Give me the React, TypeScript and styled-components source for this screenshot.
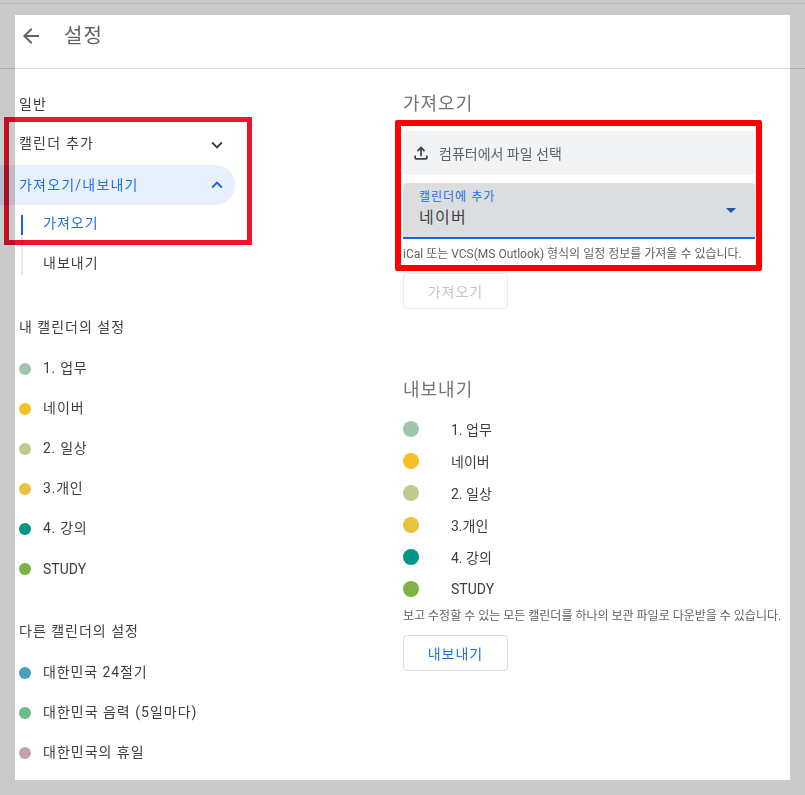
import React from "react";
import styled, { createGlobalStyle } from "styled-components";

const Global = createGlobalStyle`
  html, body { margin: 0; padding: 0; background: #cacaca; }
  * { box-sizing: border-box; }
  body { font-family: Roboto, "Noto Sans CJK KR", sans-serif; color: #3c4043; }
`;

const Page = styled.div`
  position: relative;
  width: 805px;
  height: 795px;
  padding: 15px;
  background: #cacaca;
  overflow: hidden;
`;
const TopRule = styled.div`
  position: absolute;
  left: 0;
  right: 0;
  top: 3px;
  height: 1px;
  background: #b4b4b4;
`;
const Panel = styled.div`
  width: 775px;
  height: 765px;
  background: #fff;
  display: flex;
  flex-direction: column;
`;
const Header = styled.header`
  height: 54px;
  flex: none;
  margin: 0 -15px;
  display: flex;
  align-items: center;
  border-bottom: 1px solid rgba(0, 0, 0, 0.13);
  padding: 0 0 11px 19px;
`;
const Title = styled.h1`
  margin: 0 0 0 21px;
  font-size: 20px;
  font-weight: 400;
  letter-spacing: 1px;
  color: #5f6368;
  line-height: 28px;
`;
const Body = styled.div`
  display: flex;
  flex: 1;
`;
const Sidebar = styled.nav`
  width: 388px;
  flex: none;
  padding-top: 14px;
  padding-left: 4px;
`;
const SideRow = styled.div`
  height: 40px;
  display: flex;
  align-items: center;
  font-size: 14px;
  letter-spacing: 1px;
  color: #3c4043;
`;
const GroupLabel = styled(SideRow)`
  margin-top: 24px;
  padding-bottom: 2px;
`;
const Expander = styled.div<{ $active?: boolean }>`
  height: 40px;
  display: flex;
  align-items: center;
  justify-content: space-between;
  font-size: 14px;
  letter-spacing: 1.2px;
  padding-bottom: 2px;
  width: ${(p) => (p.$active ? "235px" : "209px")};
  margin: ${(p) => (p.$active ? "2px 0 0 -19px" : "0")};
  padding-left: ${(p) => (p.$active ? "19px" : "0")};
  padding-right: ${(p) => (p.$active ? "7px" : "0")};
  color: ${(p) => (p.$active ? "#1a73e8" : "#3c4043")};
  background: ${(p) => (p.$active ? "#e8f0fe" : "transparent")};
  border-radius: ${(p) => (p.$active ? "0 20px 20px 0" : "0")};
  mix-blend-mode: ${(p) => (p.$active ? "multiply" : "normal")};
`;
const ChevronSvg = styled.svg<{ $active?: boolean }>`
  width: 22px;
  height: 22px;
  flex: none;
  margin-top: ${(p) => (p.$active ? "2px" : "6px")};
  fill: ${(p) => (p.$active ? "#1a65d2" : "#3c4043")};
`;
const SubList = styled.div`
  position: relative;
  margin-left: 2px;
  margin-top: -2px;
  &::before {
    content: "";
    position: absolute;
    left: 0;
    top: 12px;
    width: 2px;
    height: 60px;
    background: #e8eaed;
  }
`;
const SubItem = styled.div<{ $active?: boolean }>`
  position: relative;
  height: 40px;
  display: flex;
  align-items: center;
  padding-left: 22px;
  padding-bottom: 2px;
  font-size: 14px;
  letter-spacing: 1px;
  color: ${(p) => (p.$active ? "#1a73e8" : "#3c4043")};
  &::before {
    content: "";
    display: ${(p) => (p.$active ? "block" : "none")};
    position: absolute;
    left: 0;
    top: 12px;
    width: 2px;
    height: 20px;
    background: #1a65d2;
  }
`;
const Dot = styled.span<{ $c: string; $s: number; $drop?: number }>`
  width: ${(p) => p.$s}px;
  height: ${(p) => p.$s}px;
  margin-top: ${(p) => p.$drop ?? 0}px;
  border-radius: 50%;
  background: ${(p) => p.$c};
  flex: none;
`;
const CalRow = styled(SideRow)<{ $track: number; $lift: number }>`
  gap: 12px;
  letter-spacing: ${(p) => p.$track}px;
  padding-top: ${(p) => p.$lift}px;
`;
const SideGroup = styled.div`
  display: flex;
  flex-direction: column;
`;
const Main = styled.main`
  flex: 1;
  padding-top: 23px;
  display: flex;
  flex-direction: column;
`;
const Heading = styled.h2<{ $top?: number }>`
  margin: ${(p) => p.$top ?? 0}px 0 0;
  font-size: 18px;
  font-weight: 400;
  line-height: 24px;
  letter-spacing: 1px;
  color: #70757a;
`;
const FileBar = styled.div`
  width: 352px;
  height: 44px;
  margin-top: 15px;
  background: #f1f3f4;
  border-radius: 4px;
  display: flex;
  align-items: center;
  padding-left: 8px;
  gap: 8px;
  font-size: 14px;
  color: #5f6368;
`;
const SelectBox = styled.div`
  position: relative;
  width: 352px;
  height: 56px;
  margin-top: 8px;
  background: #dcdddf;
  border-radius: 4px 4px 0 0;
  border-bottom: 2px solid #1a65d2;
  padding: 7px 16px 0;
`;
const SelectLabel = styled.div`
  font-size: 12px;
  line-height: 15px;
  letter-spacing: 1px;
  color: #1a73e8;
`;
const SelectValue = styled.div`
  font-size: 16px;
  line-height: 20px;
  margin-top: 3px;
  letter-spacing: 1.3px;
  color: #3c4043;
`;
const Caret = styled.span`
  position: absolute;
  right: 19px;
  top: 25px;
  border-left: 5px solid transparent;
  border-right: 5px solid transparent;
  border-top: 5px solid #1a56b0;
`;
const Hint = styled.p<{ $top: number }>`
  margin: ${(p) => p.$top}px 0 0;
  font-size: 12px;
  line-height: 16px;
  color: #5f6368;
  white-space: nowrap;
`;
const Button = styled.button<{ $disabled?: boolean; $top: number }>`
  display: block;
  width: 105px;
  height: 36px;
  margin-top: ${(p) => p.$top}px;
  background: #fff;
  border: 1px solid ${(p) => (p.$disabled ? "#ebecee" : "#dadce0")};
  border-radius: 4px;
  font-family: inherit;
  font-size: 14px;
  letter-spacing: 1px;
  padding: 0;
  color: ${(p) => (p.$disabled ? "#c4c6c9" : "#1a73e8")};
`;
const ExportList = styled.div`
  margin-top: 11px;
`;
const ExportRow = styled.div`
  height: 32px;
  display: flex;
  align-items: center;
  gap: 32px;
  font-size: 14px;
  color: #3c4043;
`;
const LeftFrame = styled.div`
  position: absolute;
  left: 4px;
  top: 117px;
  width: 248px;
  height: 128px;
  border: 5px solid #f0142f;
  mix-blend-mode: multiply;
  pointer-events: none;
`;
const RightFrame = styled.div`
  position: absolute;
  left: 395px;
  top: 120px;
  width: 367px;
  height: 151px;
  border: 6px solid #ff0000;
  border-radius: 2px;
  pointer-events: none;
`;

const BackArrow = () => (
  <svg width="24" height="24" viewBox="0 0 24 24" fill="#5f6368">
    <path d="M20 11H7.83l5.59-5.59L12 4l-8 8 8 8 1.41-1.41L7.83 13H20v-2z" />
  </svg>
);
const Chevron = ({ up }: { up?: boolean }) => (
  <ChevronSvg viewBox="0 0 24 24" $active={up}>
    <path d={up ? "M7.41 15.41L12 10.83l4.59 4.58L18 14l-6-6-6 6z" : "M7.41 8.59L12 13.17l4.59-4.58L18 10l-6 6-6-6z"} />
  </ChevronSvg>
);
const UploadIcon = () => (
  <svg width="20" height="20" viewBox="0 0 24 24" fill="#3c4043">
    <path d="M18 15v3H6v-3H4v3c0 1.1.9 2 2 2h12c1.1 0 2-.9 2-2v-3h-2zM7 9l1.41 1.41L11 7.83V16h2V7.83l2.59 2.58L17 9l-5-5-5 5z" />
  </svg>
);

type Cal = { c: string; t: string; track: number; lift: number };
const mine: Cal[] = [
  { c: "#9fc6ac", t: "1. 업무", track: 0.7, lift: 0 },
  { c: "#f6bf26", t: "네이버", track: 1, lift: 0 },
  { c: "#c0ca8f", t: "2. 일상", track: 0.7, lift: 0 },
  { c: "#e8c33c", t: "3.개인", track: 0.8, lift: 0 },
  { c: "#009688", t: "4. 강의", track: 0.7, lift: 0 },
  { c: "#7cb342", t: "STUDY", track: 0, lift: 3 },
];
const others: Cal[] = [
  { c: "#4a9fbd", t: "대한민국 24절기", track: 0.9, lift: 0 },
  { c: "#6dbc8c", t: "대한민국 음력 (5일마다)", track: 1, lift: 0 },
  { c: "#c4a3a8", t: "대한민국의 휴일", track: 1, lift: 0 },
];

const CalRows = ({ items }: { items: Cal[] }) => (
  <SideGroup>
    {items.map((i) => (
      <CalRow key={i.t} $track={i.track} $lift={i.lift}>
        <Dot $c={i.c} $s={12} $drop={4 - i.lift} />
        {i.t}
      </CalRow>
    ))}
  </SideGroup>
);

export default function App() {
  return (
    <Page>
      <Global />
      <TopRule />
      <Panel>
        <Header>
          <BackArrow />
          <Title>설정</Title>
        </Header>
        <Body>
          <Sidebar>
            <SideRow>일반</SideRow>
            <Expander>
              캘린더 추가
              <Chevron />
            </Expander>
            <Expander $active>
              가져오기/내보내기
              <Chevron up />
            </Expander>
            <SubList>
              <SubItem $active>가져오기</SubItem>
              <SubItem>내보내기</SubItem>
            </SubList>
            <GroupLabel>내 캘린더의 설정</GroupLabel>
            <CalRows items={mine} />
            <GroupLabel>다른 캘린더의 설정</GroupLabel>
            <CalRows items={others} />
          </Sidebar>
          <Main>
            <Heading>가져오기</Heading>
            <FileBar>
              <UploadIcon />
              컴퓨터에서 파일 선택
            </FileBar>
            <SelectBox>
              <SelectLabel>캘린더에 추가</SelectLabel>
              <SelectValue>네이버</SelectValue>
              <Caret />
            </SelectBox>
            <Hint $top={7}>iCal 또는 VCS(MS Outlook) 형식의 일정 정보를 가져올 수 있습니다.</Hint>
            <Button $disabled $top={11}>가져오기</Button>
            <Heading $top={69}>내보내기</Heading>
            <ExportList>
              {mine.map((i) => (
                <ExportRow key={i.t}>
                  <Dot $c={i.c} $s={16} />
                  {i.t}
                </ExportRow>
              ))}
            </ExportList>
            <Hint $top={3}>보고 수정할 수 있는 모든 캘린더를 하나의 보관 파일로 다운받을 수 있습니다.</Hint>
            <Button $top={11}>내보내기</Button>
          </Main>
        </Body>
      </Panel>
      <LeftFrame />
      <RightFrame />
    </Page>
  );
}
